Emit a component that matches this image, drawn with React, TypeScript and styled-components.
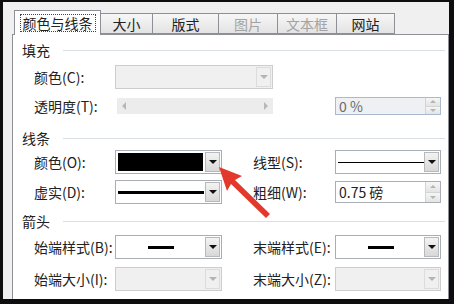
import React from "react";
import styled, { createGlobalStyle } from "styled-components";

const GlobalStyle = createGlobalStyle`
  html, body { margin: 0; padding: 0; background: #0e0e0e; }
  body { width: 454px; height: 304px; overflow: hidden; }
`;

const Frame = styled.div`
  position: relative;
  width: 454px;
  height: 304px;
  box-sizing: border-box;
  padding: 2px 5px 5px 3px;
  background: #0e0e0e;
  font-family: "Noto Sans CJK SC", "Noto Sans", sans-serif;
  font-size: 14px;
  color: #222;
`;

const Window = styled.div`
  height: 100%;
  box-sizing: border-box;
  display: flex;
  flex-direction: column;
  background: #f0f0f0;
  padding: 8px 0 0 9px;
  overflow: hidden;
`;

const TabStrip = styled.div`
  display: flex;
  align-items: flex-end;
  height: 24px;
  padding-left: 2px;
  position: relative;
  z-index: 1;
`;

const Tab = styled.div<{ $w: number; $active?: boolean; $disabled?: boolean }>`
  width: ${(p) => p.$w}px;
  height: ${(p) => (p.$active ? 25 : 21)}px;
  margin-bottom: ${(p) => (p.$active ? -1 : 0)}px;
  margin-left: -1px;
  box-sizing: border-box;
  border: 1px solid #8d9096;
  border-bottom: ${(p) => (p.$active ? "none" : "1px solid #8d9096")};
  background: ${(p) => (p.$active ? "#fff" : "linear-gradient(#f7f7f7, #e3e3e3)")};
  color: ${(p) => (p.$disabled ? "#a3a3a3" : "#222")};
  display: flex;
  align-items: center;
  justify-content: center;
  font-size: 14px;
  line-height: 1;
  &:first-child { margin-left: 0; }
`;

const FocusText = styled.span`
  border: 1px dotted #444;
  padding: 1px 2px;
`;

const Panel = styled.div`
  flex: 1;
  width: 437px;
  box-sizing: border-box;
  background: #fff;
  border: 1px solid #8d9096;
  border-bottom: none;
  padding: 7px 3px 0 9px;
`;

const Heading = styled.div<{ $mt: number }>`
  display: grid;
  grid-template-columns: 41px 1fr;
  align-items: center;
  height: 16px;
  margin-top: ${(p) => p.$mt}px;
  line-height: 1;
  &::after {
    content: "";
    height: 1px;
    background: #d9dfe4;
  }
`;

const Rows = styled.div<{ $mt: number; $gap: number }>`
  display: grid;
  grid-template-columns: 81px 107px 31px 82px 106px;
  grid-auto-rows: 26px;
  row-gap: ${(p) => p.$gap}px;
  margin-top: ${(p) => p.$mt}px;
  margin-left: 12px;
  align-items: center;
`;

const Label = styled.div`
  white-space: nowrap;
  line-height: 1;
`;

const Combo = styled.div<{ $w?: number; $disabled?: boolean; $span?: number }>`
  display: flex;
  width: ${(p) => p.$w ?? 107}px;
  height: 24px;
  box-sizing: border-box;
  padding: 1px;
  border: 1px solid ${(p) => (p.$disabled ? "#cdcdcd" : "#a9aeb6")};
  background: ${(p) => (p.$disabled ? "#f0f0f0" : "#fff")};
  grid-column: span ${(p) => p.$span ?? 1};
`;

const Field = styled.div`
  flex: 1;
  display: flex;
  align-items: center;
  justify-content: center;
`;

const Swatch = styled.div`
  flex: 1;
  align-self: stretch;
  margin: 1px 2px 1px 1px;
  background: #000;
`;

const Stroke = styled.div<{ $w: number; $h: number }>`
  width: ${(p) => p.$w}px;
  height: ${(p) => p.$h}px;
  background: #000;
`;

const DropButton = styled.div<{ $disabled?: boolean }>`
  width: 15px;
  display: flex;
  align-items: center;
  justify-content: center;
  box-sizing: border-box;
  border: 1px solid ${(p) => (p.$disabled ? "#dcdcdc" : "#b9b9b9")};
  background: ${(p) => (p.$disabled ? "#f0f0f0" : "linear-gradient(#f3f3f3, #d8d8d8)")};
`;

const Caret = styled.span<{ $disabled?: boolean; $up?: boolean; $size?: number }>`
  width: 0;
  height: 0;
  border-left: ${(p) => p.$size ?? 4}px solid transparent;
  border-right: ${(p) => p.$size ?? 4}px solid transparent;
  ${(p) => (p.$up ? "border-bottom" : "border-top")}: ${(p) => p.$size ?? 4}px solid
    ${(p) => (p.$disabled ? "#b4b4b4" : "#111")};
`;

const Slider = styled.div`
  width: 156px;
  height: 16px;
  box-sizing: border-box;
  margin-left: 2px;
  padding: 0 5px;
  background: #ececec;
  display: flex;
  align-items: center;
  justify-content: space-between;
  grid-column: span 3;
`;

const SideCaret = styled.span<{ $right?: boolean }>`
  width: 0;
  height: 0;
  border-top: 4px solid transparent;
  border-bottom: 4px solid transparent;
  ${(p) => (p.$right ? "border-left" : "border-right")}: 4px solid #b8b8b8;
`;

const Spinner = styled.div<{ $disabled?: boolean; $h: number }>`
  display: flex;
  width: 106px;
  height: ${(p) => p.$h}px;
  box-sizing: border-box;
  border: 1px solid ${(p) => (p.$disabled ? "#a9b9cf" : "#a9aeb6")};
  background: ${(p) => (p.$disabled ? "#eef0f3" : "#fff")};
  color: ${(p) => (p.$disabled ? "#6a6a6a" : "#222")};
  grid-column: 5;
`;

const SpinText = styled.div`
  flex: 1;
  display: flex;
  align-items: center;
  padding-left: 3px;
  line-height: 1;
  white-space: pre;
`;

const SpinButtons = styled.div`
  width: 14px;
  display: flex;
  flex-direction: column;
  border-left: 1px solid #d4d4d4;
`;

const SpinBtn = styled.div`
  flex: 1;
  display: flex;
  align-items: center;
  justify-content: center;
  background: linear-gradient(#f6f6f6, #e4e4e4);
  & + & { border-top: 1px solid #d4d4d4; }
`;

const Overlay = styled.svg`
  position: absolute;
  left: 0;
  top: 0;
  pointer-events: none;
`;

const tabs = [
  { name: "颜色与线条", w: 87, active: true },
  { name: "大小", w: 53 },
  { name: "版式", w: 67 },
  { name: "图片", w: 60, disabled: true },
  { name: "文本框", w: 60, disabled: true },
  { name: "网站", w: 59 },
];

function DropDown(props: { w?: number; span?: number; disabled?: boolean; children?: React.ReactNode }) {
  return (
    <Combo $w={props.w} $span={props.span} $disabled={props.disabled}>
      {props.children ?? <Field />}
      <DropButton $disabled={props.disabled}>
        <Caret $disabled={props.disabled} />
      </DropButton>
    </Combo>
  );
}

function Spin(props: { text: string; h: number; disabled?: boolean }) {
  return (
    <Spinner $h={props.h} $disabled={props.disabled}>
      <SpinText>{props.text}</SpinText>
      <SpinButtons>
        <SpinBtn><Caret $up $size={3} $disabled /></SpinBtn>
        <SpinBtn><Caret $size={3} $disabled /></SpinBtn>
      </SpinButtons>
    </Spinner>
  );
}

export default function App() {
  return (
    <Frame>
      <GlobalStyle />
      <Window>
        <TabStrip>
          {tabs.map((t) => (
            <Tab key={t.name} $w={t.w} $active={t.active} $disabled={t.disabled}>
              {t.active ? <FocusText>{t.name}</FocusText> : t.name}
            </Tab>
          ))}
        </TabStrip>
        <Panel>
          <Heading $mt={0}>填充</Heading>
          <Rows $mt={6} $gap={3}>
            <Label>颜色(C):</Label>
            <DropDown w={158} span={4} disabled />
            <Label>透明度(T):</Label>
            <Slider>
              <SideCaret />
              <SideCaret $right />
            </Slider>
            <Spin text="0 %" h={18} disabled />
          </Rows>

          <Heading $mt={11}>线条</Heading>
          <Rows $mt={3} $gap={4}>
            <Label>颜色(O):</Label>
            <DropDown>
              <Swatch />
            </DropDown>
            <span />
            <Label>线型(S):</Label>
            <DropDown w={106}>
              <Field><Stroke $w={86} $h={1} /></Field>
            </DropDown>
            <Label>虚实(D):</Label>
            <DropDown>
              <Field><Stroke $w={86} $h={3} /></Field>
            </DropDown>
            <span />
            <Label>粗细(W):</Label>
            <Spin text="0.75 磅" h={22} />
          </Rows>

          <Heading $mt={8}>箭头</Heading>
          <Rows $mt={5} $gap={6}>
            <Label>始端样式(B):</Label>
            <DropDown>
              <Field><Stroke $w={26} $h={3} /></Field>
            </DropDown>
            <span />
            <Label>末端样式(E):</Label>
            <DropDown w={106}>
              <Field><Stroke $w={26} $h={3} /></Field>
            </DropDown>
            <Label>始端大小(I):</Label>
            <DropDown disabled />
            <span />
            <Label>末端大小(Z):</Label>
            <DropDown w={106} disabled />
          </Rows>
        </Panel>
      </Window>
      <Overlay width="454" height="304" viewBox="0 0 454 304">
        <path
          d="M219 167 L242 176 L235 180 L270 214 L266 218 L231 184 L227 191 Z"
          fill="#e3392d"
        />
      </Overlay>
    </Frame>
  );
}
